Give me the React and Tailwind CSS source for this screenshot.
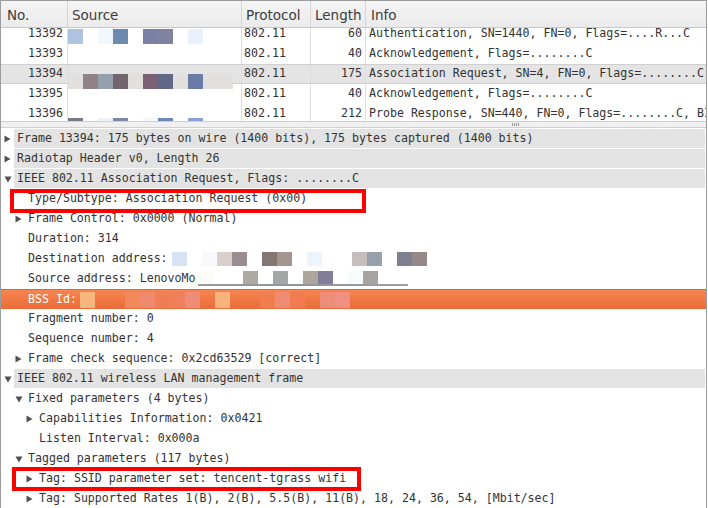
import React from "react";

const MONO = "font-['DejaVu_Sans_Mono',monospace] text-[11.6px] text-[#333333]";

// redaction mosaics: colours per 15px slot, null = empty
const packets = [
  {
    no: "13392", len: "60", info: "Authentication, SN=1440, FN=0, Flags=....R...C",
    mTop: 5,
    mosaic: ["#adc3e0", null, "#f2f7fc", "#6d8bb0", null, "#7a7fa3", "#8082a0", null, "#eaf1fa"],
  },
  { no: "13393", len: "40", info: "Acknowledgement, Flags=........C" },
  {
    no: "13394", len: "175", info: "Association Request, SN=4, FN=0, Flags=........C",
    selected: true, mTop: 9,
    mosaic: ["#e2e0de", "#8f8387", "#94a0ae", "#72656d", "#e2e0de", "#7c6175", "#626887", "#e2e0de", "#6a7ba5", "#e2e0de", "#e2e0de"],
  },
  { no: "13395", len: "40", info: "Acknowledgement, Flags=........C" },
  {
    no: "13396", len: "212", info: "Probe Response, SN=440, FN=0, Flags=........C, BI=100",
    mTop: 14,
    mosaic: ["#777a8a", null, "#edf3fb", "#7b88a8", null, "#f5f9fd", "#6f86b8", null, "#8b9fd0"],
  },
];

const destMosaic = ["#d5e3f2", null, "#f7f9fb", "#d9d0cb", "#9b8c8f", null, "#837673", "#a49590", null, "#eef4fb", null, null, "#c6bebe", "#97a0ad", null, "#7e7f8f", "#968789"];
const srcMosaic = ["#fcfbf8", null, null, "#aea9a3", null, "#a3a6a4", null, "#aca69d", "#7f7f97", null, "#f7fbfc", "#a7a49f", null, null];
const bssMosaic = ["#f8b57d", null, null, "#f08a5a", "#ef8a6f", "#f07e55", "#f07f5c", "#ef8c78", null, "#f8b27c", null, null, "#f07e4e", "#ee8b72", "#f07c50", null, "#ee8d7a", "#ef9080"];

const tree = [
  { d: 0, a: "r", top: true, t: "Frame 13394: 175 bytes on wire (1400 bits), 175 bytes captured (1400 bits)" },
  { d: 0, a: "r", top: true, t: "Radiotap Header v0, Length 26" },
  { d: 0, a: "d", top: true, t: "IEEE 802.11 Association Request, Flags: ........C" },
  { d: 1, t: "Type/Subtype: Association Request (0x00)", box: "a" },
  { d: 1, a: "r", t: "Frame Control: 0x0000 (Normal)" },
  { d: 1, t: "Duration: 314" },
  { d: 1, t: "Destination address:", m: { x: 172, top: 3, h: 14, cells: destMosaic } },
  { d: 1, t: "Source address: LenovoMo", m: { x: 198, top: 2, h: 14, cells: srcMosaic, strip: true } },
  { d: 1, t: "BSS Id:", sel: true, m: { x: 80, top: 2, h: 16, cells: bssMosaic } },
  { d: 1, t: "Fragment number: 0" },
  { d: 1, t: "Sequence number: 4" },
  { d: 1, a: "r", t: "Frame check sequence: 0x2cd63529 [correct]" },
  { d: 0, a: "d", top: true, t: "IEEE 802.11 wireless LAN management frame" },
  { d: 1, a: "d", t: "Fixed parameters (4 bytes)" },
  { d: 2, a: "r", t: "Capabilities Information: 0x0421" },
  { d: 2, t: "Listen Interval: 0x000a" },
  { d: 1, a: "d", t: "Tagged parameters (117 bytes)" },
  { d: 2, a: "r", t: "Tag: SSID parameter set: tencent-tgrass wifi", box: "b" },
  { d: 2, a: "r", t: "Tag: Supported Rates 1(B), 2(B), 5.5(B), 11(B), 18, 24, 36, 54, [Mbit/sec]" },
];

const indent = ["pl-[3px]", "pl-[14px]", "pl-[25px]"];

function Mosaic({ x, top, h, cells }) {
  return (
    <div className="absolute flex" style={{ left: x, top, height: h }}>
      {cells.map((c, i) => (
        <div key={i} className="w-[15px] h-full" style={{ background: c || "transparent" }} />
      ))}
    </div>
  );
}

function Arrow({ type, light }) {
  const fill = light ? "#ffffff" : "#505050";
  if (type === "r")
    return (
      <svg width="7" height="8" viewBox="0 0 7 8">
        <polygon points="0.5,0.5 6.5,4 0.5,7.5" fill={fill} />
      </svg>
    );
  if (type === "d")
    return (
      <svg width="8" height="7" viewBox="0 0 8 7">
        <polygon points="0.5,0.5 7.5,0.5 4,6.5" fill={fill} />
      </svg>
    );
  return null;
}

function HeaderCell({ w, pad, children }) {
  return (
    <div className={`${w} ${pad} h-full flex items-center pt-[2px] border-r border-[#d4d4d4] shrink-0`}>
      {children}
    </div>
  );
}

function PacketList() {
  return (
    <div className="h-[120px] flex flex-col">
      <div className="h-[27px] shrink-0 flex bg-gradient-to-b from-[#f4f4f4] to-[#ebebeb] border-b border-[#c8c8c8] font-['DejaVu_Sans',sans-serif] text-[13.5px] text-[#3c3c3c]">
        <HeaderCell w="w-[67px]" pad="pl-[6px]">No.</HeaderCell>
        <HeaderCell w="w-[174px]" pad="pl-[4px]">Source</HeaderCell>
        <HeaderCell w="w-[69px]" pad="pl-[4px]">Protocol</HeaderCell>
        <HeaderCell w="w-[55px]" pad="pl-[4px]">Length</HeaderCell>
        <div className="flex-1 pl-[5px] pt-[2px] h-full flex items-center">Info</div>
      </div>
      <div className="flex-1 overflow-hidden">
        <div className="-mt-[4px]">
          {packets.map((p) => (
            <div
              key={p.no}
              className={`h-[20px] flex whitespace-nowrap ${MONO} ${p.selected ? "bg-[#e4e4e4] border-y border-[#d0d0d0]" : ""}`}
            >
              <div className="w-[67px] shrink-0 pr-[4px] flex items-center justify-end border-r border-[#dedede]">{p.no}</div>
              <div className="w-[174px] shrink-0 relative border-r border-[#dedede]">
                {p.mosaic && <Mosaic x={0} top={p.mTop} h={15} cells={p.mosaic} />}
              </div>
              <div className="w-[69px] shrink-0 pl-[2px] flex items-center border-r border-[#dedede]">802.11</div>
              <div className="w-[55px] shrink-0 pr-[3px] flex items-center justify-end border-r border-[#dedede]">{p.len}</div>
              <div className="flex-1 pl-[3px] flex items-center overflow-hidden">{p.info}</div>
            </div>
          ))}
        </div>
      </div>
    </div>
  );
}

function Splitter() {
  return (
    <div className="h-[7px] shrink-0 bg-[#f0f0f0] border-t border-[#cfcfcf] border-b border-[#a9a9a9] flex items-center justify-start">
      <div className="ml-[511px] flex gap-[1px]">
        <div className="w-[1px] h-[3px] bg-[#9a9a9a]" />
        <div className="w-[1px] h-[3px] bg-[#9a9a9a]" />
        <div className="w-[1px] h-[3px] bg-[#9a9a9a]" />
        <div className="w-[1px] h-[3px] bg-[#9a9a9a]" />
      </div>
    </div>
  );
}

function TreeRow({ r }) {
  const rowBg = r.sel
    ? "bg-gradient-to-b from-[#f5854f] to-[#ea6b38] border-t border-[#e4662f]"
    : "";
  return (
    <div className={`relative h-[20px] flex whitespace-nowrap ${MONO} ${indent[r.d]} ${rowBg}`}>
      <div className="w-[10px] shrink-0 flex items-center">
        <Arrow type={r.a} light={r.sel} />
      </div>
      <div
        className={`flex-1 pl-[3px] flex items-center ${r.top ? "bg-[#e3e3e3] border-b border-white mr-[1px]" : ""} ${r.sel ? "text-white" : ""}`}
      >
        {r.t}
      </div>
      {r.m && <Mosaic x={r.m.x - 1} top={r.m.top} h={r.m.h} cells={r.m.cells} />}
      {r.m && r.m.strip && (
        <div className="absolute left-[197px] top-[15px] w-[210px] h-[2px] bg-gradient-to-r from-[#9a9a9a] via-[#8e94a2] to-[#a0a0a0]" />
      )}
      {r.box === "a" && (
        <div className="absolute left-[9px] top-0 w-[356px] h-[24px] border-[4px] border-[#ff0000]" />
      )}
      {r.box === "b" && (
        <div className="absolute left-[11px] -top-[2px] w-[349px] h-[24px] border-[4px] border-[#ff0000]" />
      )}
    </div>
  );
}

export default function App() {
  return (
    <div className="w-[708px] h-[508px] bg-white overflow-hidden">
      <div className="w-[707px] h-[508px] flex flex-col border-l border-t border-r border-[#9c9c9c]">
        <PacketList />
        <Splitter />
        <div className="flex-1 overflow-hidden pt-[1px]">
          {tree.map((r, i) => (
            <TreeRow key={i} r={r} />
          ))}
        </div>
      </div>
    </div>
  );
}
